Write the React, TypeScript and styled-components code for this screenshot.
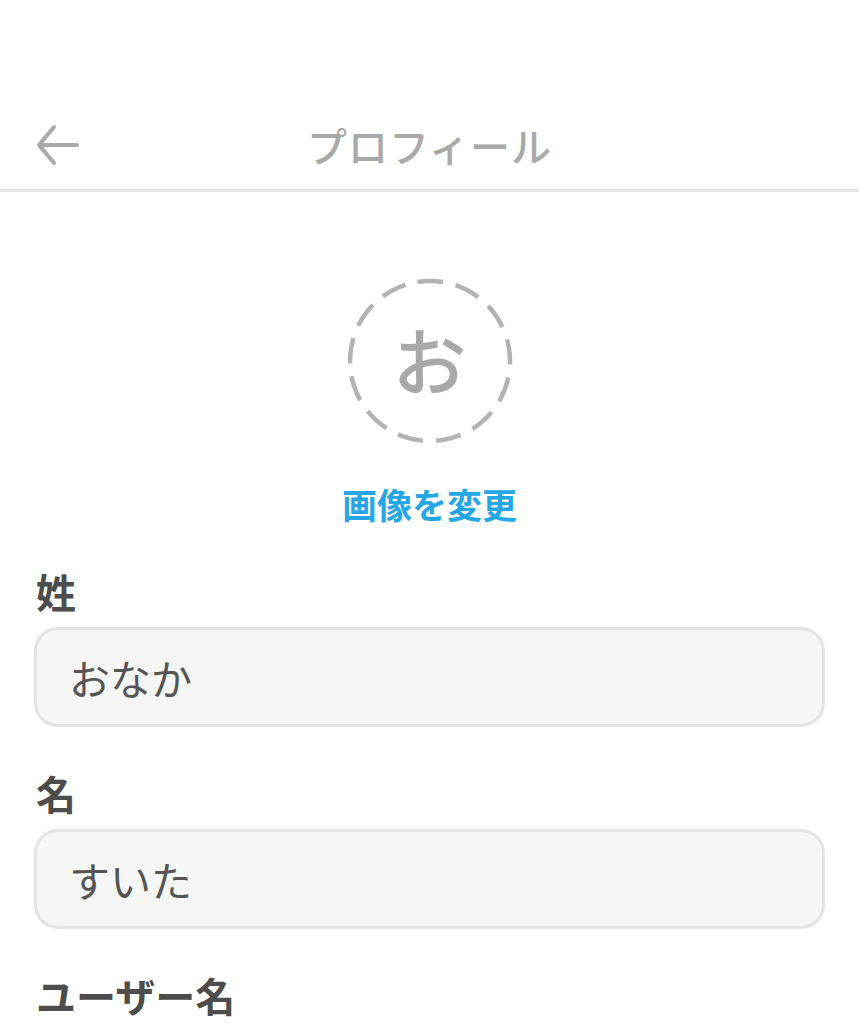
import React from "react";
import styled, { createGlobalStyle } from "styled-components";

const Global = createGlobalStyle`
  html, body { margin: 0; padding: 0; background: #ffffff; }
  body { font-family: "Noto Sans CJK JP", "Noto Sans", sans-serif; }
  * { box-sizing: border-box; }
`;

const Page = styled.div`
  width: 859px;
  height: 1024px;
  overflow: hidden;
  background: #ffffff;
  display: flex;
  flex-direction: column;
`;

const Header = styled.header`
  flex-shrink: 0;
  padding-top: 100px;
  border-bottom: 3px solid #e6e6e6;
`;

const HeaderRow = styled.div`
  height: 89px;
  display: grid;
  grid-template-columns: 120px 1fr 120px;
  align-items: center;
`;

const BackButton = styled.button`
  border: none;
  background: transparent;
  padding: 0 0 0 35px;
  height: 60px;
  display: flex;
  align-items: center;
  cursor: pointer;
`;

const Title = styled.h1`
  margin: 0;
  text-align: center;
  font-size: 40px;
  font-weight: 500;
  color: #a9a9a9;
  letter-spacing: 1px;
`;

const AvatarSection = styled.section`
  flex-shrink: 0;
  display: flex;
  flex-direction: column;
  align-items: center;
  padding-top: 86px;
`;

const Avatar = styled.div`
  position: relative;
  width: 166px;
  height: 166px;
  display: flex;
  align-items: center;
  justify-content: center;
`;

const Ring = styled.svg`
  position: absolute;
  inset: 0;
`;

const Initial = styled.span`
  font-size: 74px;
  line-height: 1;
  color: #a9a9a9;
  font-weight: 500;
  margin-top: -6px;
`;

const ChangeLink = styled.button`
  margin-top: 34px;
  border: none;
  background: transparent;
  padding: 0;
  font-family: inherit;
  font-size: 35px;
  font-weight: 700;
  color: #27a6e6;
  cursor: pointer;
`;

const Form = styled.div`
  flex-shrink: 0;
  display: flex;
  flex-direction: column;
  gap: 40px;
  padding: 36px 34px 0 34px;
`;

const Field = styled.div`
  flex-shrink: 0;
  display: flex;
  flex-direction: column;
  gap: 10px;
`;

const Label = styled.label`
  font-size: 40px;
  font-weight: 700;
  line-height: 52px;
  color: #4d4d4d;
  padding-left: 2px;
`;

const Input = styled.div`
  height: 100px;
  flex-shrink: 0;
  border: 3px solid #e4e4e4;
  border-radius: 24px;
  background: #f6f6f7;
  display: flex;
  align-items: center;
  padding-left: 32px;
  font-size: 41px;
  color: #555555;
`;

const fields = [
  { label: "姓", value: "おなか" },
  { label: "名", value: "すいた" },
  { label: "ユーザー名", value: "" },
];

export default function App() {
  return (
    <Page>
      <Global />
      <Header>
        <HeaderRow>
          <BackButton aria-label="戻る">
            <svg width="46" height="44" viewBox="0 0 46 44" fill="none">
              <path
                d="M42 22H5M19 4L4 22l15 18"
                stroke="#a9a9a9"
                strokeWidth="4"
                strokeLinecap="round"
                strokeLinejoin="round"
              />
            </svg>
          </BackButton>
          <Title>プロフィール</Title>
          <div />
        </HeaderRow>
      </Header>
      <AvatarSection>
        <Avatar>
          <Ring width="166" height="166" viewBox="0 0 166 166">
            <circle
              cx="83"
              cy="83"
              r="80"
              fill="none"
              stroke="#b3b3b3"
              strokeWidth="4.5"
              strokeDasharray="25.5 13.17"
              transform="rotate(-99 83 83)"
            />
          </Ring>
          <Initial>お</Initial>
        </Avatar>
        <ChangeLink>画像を変更</ChangeLink>
      </AvatarSection>
      <Form>
        {fields.map((f) => (
          <Field key={f.label}>
            <Label>{f.label}</Label>
            <Input>{f.value}</Input>
          </Field>
        ))}
      </Form>
    </Page>
  );
}
